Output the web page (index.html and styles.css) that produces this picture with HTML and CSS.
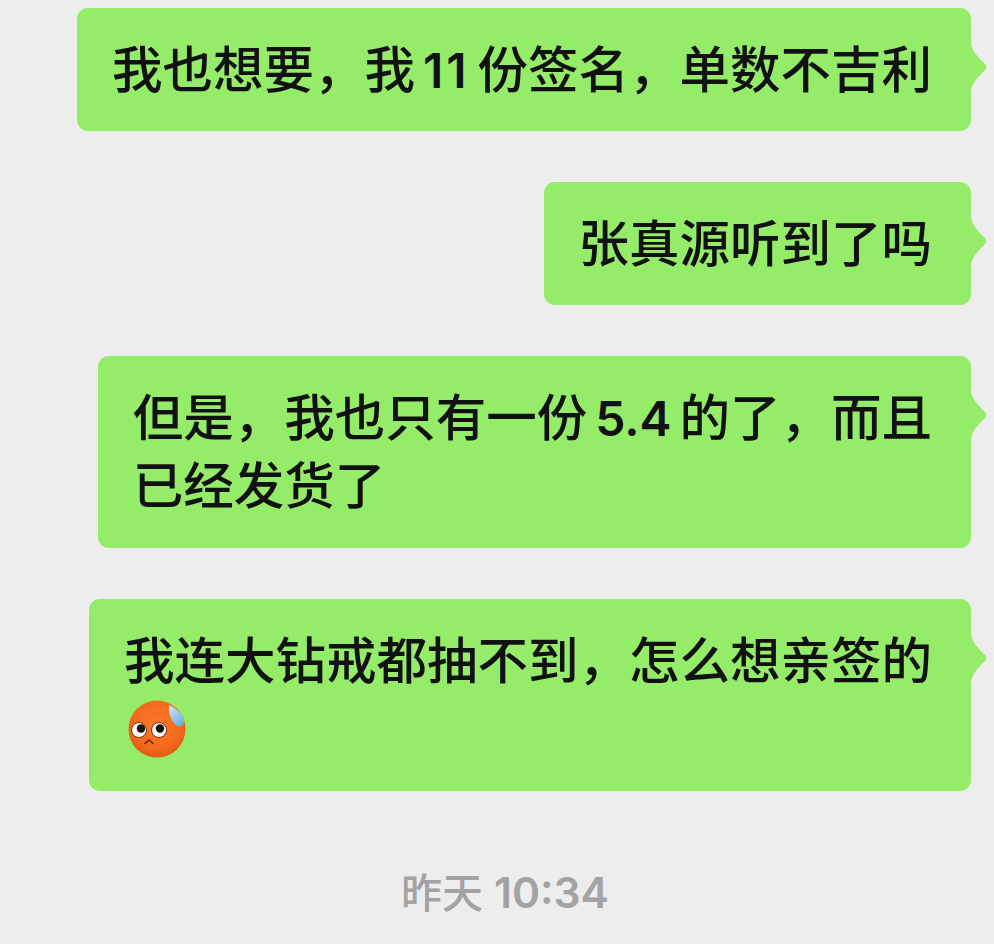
FILE: index.html
```html
<!DOCTYPE html>
<html lang="zh-CN">
<head>
<meta charset="utf-8">
<title>聊天记录</title>
<link rel="stylesheet" href="styles.css">
</head>
<body>
<main class="chat">
  <div class="bubble">我也想要，我<span class="num num-wide">11</span>份签名，单数不吉利</div>
  <div class="bubble">张真源听到了吗</div>
  <div class="bubble bubble-multi">但是，我也只有一份<span class="num">5.4</span>的了，而且<br>已经发货了</div>
  <div class="bubble bubble-multi">我连大钻戒都抽不到，怎么想亲签的<br>
    <svg class="emoji" viewBox="0 0 60 60" aria-hidden="true">
      <defs>
        <radialGradient id="face" cx="50%" cy="42%" r="58%">
          <stop offset="0" stop-color="#f9782a"/>
          <stop offset="0.75" stop-color="#f4691d"/>
          <stop offset="1" stop-color="#e15a10"/>
        </radialGradient>
        <linearGradient id="drop" x1="0" y1="0" x2="0.6" y2="1">
          <stop offset="0" stop-color="#d3e6f0"/>
          <stop offset="1" stop-color="#6fb3e3"/>
        </linearGradient>
      </defs>
      <circle cx="29" cy="30" r="28.500" fill="url(#face)"/>
      <path d="M41 6 C48 9 55 15 56 21 C56.500 26 52 29 48 26 C43 22 40 13 41 6Z" fill="url(#drop)"/>
      <circle cx="11" cy="31" r="7.500" fill="#fff" stroke="#7a2c08" stroke-width="1"/>
      <circle cx="31" cy="31" r="7.500" fill="#fff" stroke="#7a2c08" stroke-width="1"/>
      <circle cx="13" cy="29.500" r="4.200" fill="#111"/>
      <circle cx="32" cy="29.500" r="4.200" fill="#111"/>
      <path d="M16.500 45 L21 41 L25.500 45" fill="none" stroke="#6b2408" stroke-width="1.500"/>
    </svg>
  </div>
  <p class="time">昨天 <span class="clock">10:34</span></p>
</main>
</body>
</html>
```
FILE: styles.css
```css
* { box-sizing: border-box; }

html, body {
  margin: 0;
  height: 100%;
  background: #ededed;
  overflow: hidden;
}

.chat {
  display: flex;
  flex-direction: column;
  align-items: flex-end;
  gap: 51px;
  padding: 8px 23px 0 0;
  font-family: Inter, "Noto Sans CJK SC", sans-serif;
}

.bubble {
  position: relative;
  background: #95ec69;
  color: #111;
  border-radius: 11px;
  padding: 28px 39px 27px 35px;
  font-size: 50.500px;
  font-weight: 500;
  line-height: 68px;
  white-space: nowrap;
}

.bubble-multi {
  padding-bottom: 28px;
}

.num {
  margin: 0 8px;
  font-size: 48px;
  font-weight: 600;
  line-height: 1;
}

.num-wide {
  letter-spacing: 3px;
}

.bubble::after {
  content: "";
  position: absolute;
  top: 36px;
  left: 100%;
  width: 16px;
  height: 46px;
  background: #95ec69;
  clip-path: path("M0 0 C2 8 6 12 14 20 C16 22 16 24 14 26 C6 34 2 38 0 46 Z");
}

.emoji {
  display: inline-block;
  width: 60px;
  height: 60px;
  vertical-align: -12px;
  margin-left: 4px;
}

.time {
  align-self: center;
  margin: 26px 0 0 39px;
  color: #a3a3a3;
  font-size: 41px;
  font-weight: 500;
  line-height: 50px;
}

.clock {
  font-size: 42.500px;
  font-weight: 600;
}
```
